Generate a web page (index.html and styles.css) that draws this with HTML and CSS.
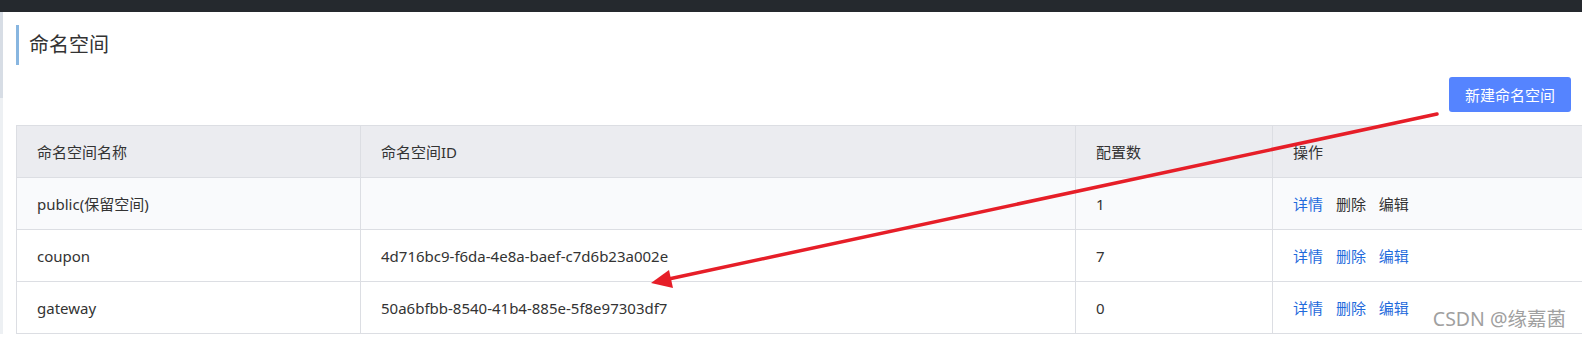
FILE: index.html
```html
<!DOCTYPE html>
<html lang="zh-CN">
<head>
    <meta charset="UTF-8">
    <meta name="viewport" content="width=device-width, initial-scale=1.0">
    <title>命名空间</title>
    <link rel="stylesheet" href="styles.css">
</head>
<body>
    <div class="topbar"></div>

    <div class="main">
        <div class="edge"></div>
        <div class="page">
            <h1 class="page-title">命名空间</h1>

            <div class="toolbar">
                <button class="btn-primary">新建命名空间</button>
            </div>

            <table class="ns-table">
                <colgroup>
                    <col class="col-name">
                    <col class="col-id">
                    <col class="col-count">
                    <col>
                </colgroup>
                <thead>
                    <tr>
                        <th>命名空间名称</th>
                        <th>命名空间ID</th>
                        <th>配置数</th>
                        <th>操作</th>
                    </tr>
                </thead>
                <tbody>
                    <tr class="reserved">
                        <td>public(保留空间)</td>
                        <td></td>
                        <td>1</td>
                        <td class="ops">
                            <a href="#">详情</a>
                            <span class="disabled">删除</span>
                            <span class="disabled">编辑</span>
                        </td>
                    </tr>
                    <tr>
                        <td>coupon</td>
                        <td>4d716bc9-f6da-4e8a-baef-c7d6b23a002e</td>
                        <td>7</td>
                        <td class="ops">
                            <a href="#">详情</a>
                            <a href="#">删除</a>
                            <a href="#">编辑</a>
                        </td>
                    </tr>
                    <tr>
                        <td>gateway</td>
                        <td>50a6bfbb-8540-41b4-885e-5f8e97303df7</td>
                        <td>0</td>
                        <td class="ops">
                            <a href="#">详情</a>
                            <a href="#">删除</a>
                            <a href="#">编辑</a>
                        </td>
                    </tr>
                </tbody>
            </table>
        </div>
    </div>

    <!-- annotation drawn over the screenshot -->
    <svg class="arrow" width="1582" height="338" viewBox="0 0 1582 338">
        <line x1="1437" y1="114" x2="664" y2="280" stroke="#e61e28" stroke-width="3.5" stroke-linecap="round"/>
        <polygon points="651,283 669,270 673,288" fill="#e61e28"/>
    </svg>

    <div class="watermark">CSDN @缘嘉菌</div>
</body>
</html>
```

FILE: styles.css
```css
body {
    margin: 0;
    padding: 0;
    font-family: "Noto Sans", "Noto Sans CJK SC", sans-serif;
    color: #333;
    background: #fff;
    overflow: hidden;
    position: relative;
    height: 338px;
}

.topbar {
    height: 12px;
    background: #25292e;
}

.main {
    display: flex;
}

.edge {
    flex: 0 0 3px;
    background: linear-gradient(#d7dde5 0, #d7dde5 86px, #edf0f3 86px);
}

.page {
    flex: 1;
    min-width: 0;
    padding: 13px 0 0 13px;
}

.page-title {
    margin: 0;
    height: 40px;
    line-height: 40px;
    border-left: 3px solid #88b6e0;
    padding-left: 10px;
    font-size: 20px;
    font-weight: normal;
    color: #333;
}

.toolbar {
    display: flex;
    justify-content: flex-end;
    padding: 12px 11px 0 0;
}

.btn-primary {
    width: 122px;
    height: 35px;
    border: none;
    border-radius: 3px;
    background: #5584ff;
    color: #fff;
    font-family: inherit;
    font-size: 15px;
    padding: 0;
}

.ns-table {
    margin-top: 13px;
    width: 1600px;
    border-collapse: collapse;
    table-layout: fixed;
    font-size: 15px;
}

.col-name { width: 344px; }
.col-id { width: 715px; }
.col-count { width: 197px; }

.ns-table tr {
    height: 52px;
}

.ns-table th,
.ns-table td {
    padding: 0 20px;
    border: 1px solid #dcdee3;
    text-align: left;
    font-weight: normal;
}

.ns-table th {
    background: #ebecf0;
    color: #333;
}

.reserved td {
    background: #f9fafc;
}

.ops a,
.ops span {
    margin-right: 9px;
    text-decoration: none;
}

.ops a {
    color: #1f6bdc;
}

.ops .disabled {
    color: #333;
}

.arrow {
    position: absolute;
    top: 0;
    left: 0;
    pointer-events: none;
}

.watermark {
    position: absolute;
    right: 16px;
    bottom: 6px;
    font-size: 19.5px;
    color: #a0a0a0;
    text-shadow: 0 0 1px #fff;
}
```
